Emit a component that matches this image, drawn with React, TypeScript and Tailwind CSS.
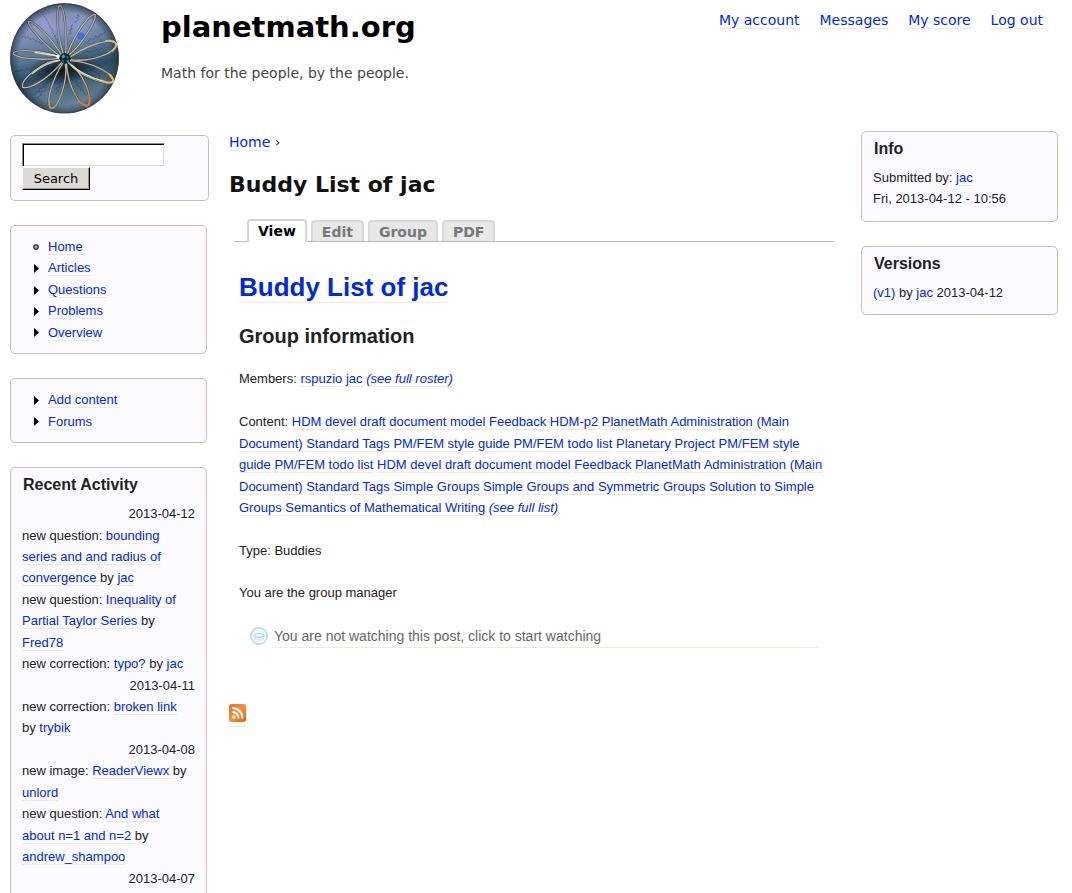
import type { ReactNode } from "react";

function A({ children, className = "" }: { children: ReactNode; className?: string }) {
  return (
    <a href="#" className={`border-b border-[#f0ead8] text-[#0029de] ${className}`}>
      {children}
    </a>
  );
}

const petals = [
  "M192 168 C166 92 170 20 180 16 C193 20 201 92 197 165",
  "M202 162 C228 95 268 42 285 43 C292 62 240 138 208 164",
  "M212 170 C255 140 326 112 348 130 C354 156 275 188 212 179",
  "M210 182 C268 184 346 220 339 245 C322 256 240 232 205 187",
  "M204 187 C250 215 282 298 263 318 C236 320 204 255 199 190",
  "M196 190 C204 240 176 324 153 326 C134 308 160 230 190 188",
  "M184 180 C130 180 58 240 68 262 C98 270 162 218 187 185",
  "M178 169 C92 145 44 150 39 160 C46 174 112 182 178 175",
  "M184 164 C150 108 100 62 85 64 C84 84 146 144 180 168",
];

const scribbles = [
  "M126 40 q5 3 5 9 q7 3 7 9 q7 5 6 12 q7 5 7 13 q8 6 8 15 q7 8 7 16 q6 8 8 20",
  "M66 112 l8-5 l3 8 l9-5 l5 8 l8-3 l6 8 l9 0 l7 7 l10-1 l8 8 l12 4 l10 9",
  "M233 42 l4 8 l-8 3 l6 6 l-10 7 l5 5 M219 74 l-9 6 l8 7 l-11 4 l7 7 l-10 6",
  "M316 96 l-8 8 l-7-2 l-6 9 l-9-2 l-6 10 l-10-3 l-6 10 l-10 0",
  "M306 143 l-9 10 l-4-7 l-9 9 l-6-5 l-9 7 l-8-4 l-10 5",
  "M44 216 l9-5 l3 5 l10-7 l7 4 l9-8 l9 5 l11-9 l10 4 l12-10 l12 2",
  "M103 285 l8-11 l6 4 l2-14 l9 1 l3-13 l10-2 l3-12 M112 294 l10-8 l1-11 l11-2 l3-14",
  "M166 282 l9-8 l-6-9 l12-5 l-4-11 l9-6 M186 242 l3-12",
  "M227 242 l7 8 l-2 8 l11 3 l-1 10 l10 2 l1 11",
  "M250 196 l9 8 l8-3 l4 10 l10-1 l6 10 l9 0 l3 12 M263 221 l10 6 l8-1 l8 9",
];

function Logo() {
  return (
    <svg viewBox="30 9 327 333" className="h-[111px] w-[109px]" role="img" aria-label="Home">
      <defs>
        <linearGradient id="sky" x1="0.3" y1="0" x2="0.55" y2="1">
          <stop offset="0" stopColor="#7d88a8" />
          <stop offset="0.25" stopColor="#8290b8" />
          <stop offset="0.46" stopColor="#54768f" />
          <stop offset="0.64" stopColor="#2b4c64" />
          <stop offset="1" stopColor="#7593a8" />
        </linearGradient>
        <radialGradient id="rim">
          <stop offset="0.84" stopColor="#10202c" stopOpacity="0" />
          <stop offset="0.96" stopColor="#1d3038" stopOpacity="0.5" />
          <stop offset="1" stopColor="#26363b" stopOpacity="0.9" />
        </radialGradient>
        <radialGradient id="shade">
          <stop offset="0" stopColor="#03101c" stopOpacity="0.9" />
          <stop offset="1" stopColor="#03101c" stopOpacity="0" />
        </radialGradient>
        <radialGradient id="lilac">
          <stop offset="0" stopColor="#a3a5df" stopOpacity="0.75" />
          <stop offset="1" stopColor="#8e9bd0" stopOpacity="0" />
        </radialGradient>
        <radialGradient id="spark">
          <stop offset="0" stopColor="#5a8cff" />
          <stop offset="0.45" stopColor="#2858f0" stopOpacity="0.85" />
          <stop offset="1" stopColor="#2858f0" stopOpacity="0" />
        </radialGradient>
        <linearGradient id="wire" gradientUnits="userSpaceOnUse" x1="100" y1="20" x2="300" y2="320">
          <stop offset="0" stopColor="#8b8c8a" />
          <stop offset="0.4" stopColor="#bdb9aa" />
          <stop offset="0.7" stopColor="#cdb78c" />
          <stop offset="1" stopColor="#b97a50" />
        </linearGradient>
      </defs>
      <ellipse cx="193.500" cy="175" rx="163" ry="165" fill="url(#sky)" />
      <ellipse cx="140" cy="75" rx="80" ry="55" fill="url(#lilac)" />
      <ellipse cx="240" cy="90" rx="70" ry="65" fill="url(#lilac)" opacity="0.6" />
      <ellipse cx="140" cy="280" rx="70" ry="45" fill="url(#lilac)" opacity="0.4" />
      <ellipse cx="175" cy="212" rx="90" ry="44" fill="url(#shade)" />
      <ellipse cx="225" cy="200" rx="75" ry="42" fill="url(#shade)" opacity="0.5" />
      <ellipse cx="193.500" cy="175" rx="163" ry="165" fill="url(#rim)" />
      <g fill="none" stroke="#14222f" strokeWidth="3" opacity="0.4">
        {scribbles.map((d) => (
          <path key={d} d={d} strokeDasharray="8 3" />
        ))}
      </g>
      <g fill="none" strokeLinejoin="round">
        {petals.map((d) => (
          <path key={d} d={d} stroke="#1b2224" strokeWidth="7" opacity="0.6" />
        ))}
        {petals.map((d) => (
          <path key={d} d={d} stroke="url(#wire)" strokeWidth="4" />
        ))}
      </g>
      <g fill="none" strokeLinecap="round">
        <path d="M318 123 Q341 120 348 131 Q350 142 336 153" stroke="#d8b57a" strokeWidth="6" />
        <path d="M329 224 Q343 239 338 246 Q325 251 303 242" stroke="#e8b765" strokeWidth="7" />
        <path d="M268 292 Q271 313 262 318 Q248 316 236 303" stroke="#c9794e" strokeWidth="7" />
        <path d="M168 316 Q158 326 152 325 Q146 317 147 302" stroke="#b89160" strokeWidth="6" />
        <path d="M215 196 Q245 224 303 242" stroke="#f2e4bd" strokeWidth="4" />
        <path d="M105 157 L172 168" stroke="#ece5c7" strokeWidth="4" />
        <path d="M98 220 Q140 186 180 181" stroke="#d8ceb2" strokeWidth="4" />
      </g>
      <circle cx="195" cy="175" r="16" fill="#10262f" />
      <path d="M184 168 l8-5 l4 8 l-8 5z M198 182 l10-2 l-4 9z" fill="#2fa3b5" />
      <path d="M199 166 l8 5 l-6 6z M185 180 l8 0 l-3 8z" fill="#3864ad" />
      <path d="M170 164 l9 2 l-2 9 l-8-2z" fill="#f4f0e2" />
      <circle cx="242" cy="108" r="14" fill="url(#spark)" />
    </svg>
  );
}

function Box({ title, children, className = "" }: { title?: string; children: ReactNode; className?: string }) {
  return (
    <section
      className={`rounded-[5px] border border-[#cbbdb0] bg-[#fafaff] px-[11px] font-['Liberation_Sans',Arial,sans-serif] text-[13px] leading-[1.65] ${className}`}
    >
      {title && <h2 className="mb-2 px-px pt-[7px] text-base leading-5 font-bold">{title}</h2>}
      {children}
    </section>
  );
}

function Menu({ items }: { items: string[] }) {
  return (
    <ul className="pl-[10px]">
      {items.map((item) => (
        <li key={item} className="flex items-center gap-2">
          <svg viewBox="0 0 8 10" className="h-[10px] w-2" aria-hidden="true">
            {item === "Home" ? (
              <circle cx="4" cy="5" r="2.200" fill="#aaa" stroke="#333" strokeWidth="1.300" />
            ) : (
              <path d="M2 1 L7 5.500 L2 10 Z" fill="#000" />
            )}
          </svg>
          <span>
            <A>{item}</A>
          </span>
        </li>
      ))}
    </ul>
  );
}

type Entry = { kind: string; title: string; by: string };
const activity: { date: string; entries: Entry[] }[] = [
  {
    date: "2013-04-12",
    entries: [
      { kind: "question", title: "bounding series and and radius of convergence ", by: "jac" },
      { kind: "question", title: "Inequality of Partial Taylor Series ", by: "Fred78" },
      { kind: "correction", title: "typo? ", by: "jac" },
    ],
  },
  { date: "2013-04-11", entries: [{ kind: "correction", title: "broken link ", by: "trybik" }] },
  {
    date: "2013-04-08",
    entries: [
      { kind: "image", title: "ReaderViewx ", by: "unlord" },
      { kind: "question", title: "And what about n=1 and n=2 ", by: "andrew_shampoo" },
    ],
  },
  { date: "2013-04-07", entries: [] },
];

const content = [
  "HDM devel draft document model",
  "Feedback",
  "HDM-p2",
  "PlanetMath Administration (Main Document)",
  "Standard Tags",
  "PM/FEM style guide",
  "PM/FEM todo list",
  "Planetary Project",
  "PM/FEM style guide",
  "PM/FEM todo list",
  "HDM devel draft document model",
  "Feedback",
  "PlanetMath Administration (Main Document)",
  "Standard Tags",
  "Simple Groups",
  "Simple Groups and Symmetric Groups",
  "Solution to Simple Groups",
  "Semantics of Mathematical Writing",
];

function Tabs() {
  return (
    <nav className="mx-[5px] mt-5 flex h-[23px] items-end gap-1 border-b border-[#bbb] pl-[13px] text-sm leading-[21px] font-bold">
      <a
        href="#"
        aria-current="page"
        className="-mb-px h-[23px] rounded-t-[4px] border-x-2 border-t-2 border-[#d4d4d4] bg-white px-[9px] text-black"
      >
        View
      </a>
      {["Edit", "Group", "PDF"].map((t) => (
        <a
          key={t}
          href="#"
          className="h-[21px] rounded-t-[4px] border-x-2 border-t-2 border-[#d9d9d9] bg-[#e8e8e8] px-[9px] leading-5 text-[#777]"
        >
          {t}
        </a>
      ))}
    </nav>
  );
}

export default function App() {
  return (
    <div className="bg-white font-['DejaVu_Sans',Verdana,sans-serif] text-sm text-[#222]">
      <header className="flex h-[131px] items-start pt-[3px] pr-[29px] pl-[10px]">
        <a href="#">
          <Logo />
        </a>
        <div className="ml-[42px] flex-1">
          <h1 className="pt-[5px] text-[29px] leading-[38px] font-bold text-black">planetmath.org</h1>
          <p className="mt-[17px] leading-5 text-[#444]">Math for the people, by the people.</p>
        </div>
        <nav className="flex gap-5 pt-[7px] leading-5">
          {["My account", "Messages", "My score", "Log out"].map((l) => (
            <span key={l}>
              <A>{l}</A>
            </span>
          ))}
        </nav>
      </header>

      <div className="flex items-start pr-[14px] pl-[10px]">
        <aside className="flex w-[197px] shrink-0 flex-col gap-6 pt-1">
          <Box className="-mr-[2px] h-[66px] pt-[7px]">
            <form onSubmit={(e) => e.preventDefault()}>
              <input
                type="text"
                aria-label="Search"
                className="block h-6 w-[143px] border border-t-[#8d8a83] border-r-white border-b-white border-l-[#8d8a83] bg-white px-1 shadow-[inset_1px_1px_0_#000,inset_-1px_-1px_0_#dcdad5]"
              />
              <button
                type="submit"
                className="block h-[23px] w-[68px] border border-t-white border-r-black border-b-black border-l-white bg-[#dcdad5] font-['DejaVu_Sans',Verdana,sans-serif] leading-5 text-black shadow-[inset_-1px_-1px_0_#9b9892]"
              >
                Search
              </button>
            </form>
          </Box>
          <Box className="pt-[10px] pb-[10px]">
            <Menu items={["Home", "Articles", "Questions", "Problems", "Overview"]} />
          </Box>
          <Box className="pt-[10px] pb-[10px]">
            <Menu items={["Add content", "Forums"]} />
          </Box>
          <Box title="Recent Activity" className="pb-3">
            {activity.map((day) => (
              <div key={day.date}>
                <p className="text-right">{day.date}</p>
                {day.entries.map((e) => (
                  <p key={e.title} className="pr-[3px]">
                    new {e.kind}: <A>{e.title}</A>by <A>{e.by}</A>
                  </p>
                ))}
              </div>
            ))}
          </Box>
        </aside>

        <main className="mr-[22px] ml-[22px] min-w-0 flex-1">
          <p className="pt-px leading-5">
            <A>Home</A> ›
          </p>
          <h1 className="mt-[19px] text-[22px] leading-7 font-bold text-[#111]">Buddy List of jac</h1>
          <Tabs />
          <article className="px-[10px] font-['Liberation_Sans',Arial,sans-serif] text-[13px] leading-[1.65]">
            <h2 className="mt-[27px] text-[26px] leading-9 font-bold">
              <A>Buddy List of jac</A>
            </h2>
            <h3 className="mt-[17px] text-xl leading-7 font-bold">Group information</h3>
            <p className="mt-[18px]">
              Members: <A>rspuzio</A> <A>jac</A>{" "}
              <em>
                <A>(see full roster)</A>
              </em>
            </p>
            <p className="mt-[22px]">
              Content:{" "}
              {content.map((c, i) => (
                <span key={i}>
                  <A>{c}</A>{" "}
                </span>
              ))}
              <em>
                <A>(see full list)</A>
              </em>
            </p>
            <p className="mt-[21px]">Type: Buddies</p>
            <p className="mt-[21px]">You are the group manager</p>
            <div className="mt-[21px] mr-[6px] ml-[11px] flex items-center gap-[6px]">
              <svg viewBox="0 0 18 18" className="h-[18px] w-[18px]" aria-hidden="true">
                <circle cx="9" cy="9" r="8.200" fill="#f4f5f8" stroke="#b4dbf5" strokeWidth="1.600" />
                <path d="M4 10.500 Q9 15 14 10.500" fill="none" stroke="#e6e7ea" strokeWidth="2" />
                <path d="M3.500 8.500 Q9 4 14.500 8.500 Q9 12.500 3.500 8.500 Z" fill="#e6f1f7" stroke="#afd3e8" strokeWidth="1" />
              </svg>
              <a href="#" className="mr-[5px] flex-1 border-b border-[#f0ead8] text-sm leading-[22px] text-[#666]">
                You are not watching this post, click to start watching
              </a>
            </div>
          </article>
          <a href="#" aria-label="RSS feed" className="mt-14 inline-block border-b border-[#f0ead8] pb-1">
            <svg viewBox="0 0 17 18" className="h-[18px] w-[17px]" aria-hidden="true">
              <defs>
                <linearGradient id="rss" x1="0" y1="0" x2="1" y2="1">
                  <stop offset="0" stopColor="#e0702b" />
                  <stop offset="0.5" stopColor="#f4943c" />
                  <stop offset="1" stopColor="#d95f21" />
                </linearGradient>
              </defs>
              <rect width="17" height="18" rx="2.500" fill="url(#rss)" />
              <circle cx="4.800" cy="13" r="1.700" fill="#fff" />
              <path d="M3.300 8 Q9.200 8.300 9.500 14.500 M3.300 4 Q13 4.500 13.500 14.500" fill="none" stroke="#fff" strokeWidth="1.900" />
            </svg>
          </a>
        </main>

        <aside className="flex w-[197px] shrink-0 flex-col gap-6">
          <Box title="Info" className="pb-[11px]">
            <p>
              Submitted by: <A>jac</A>
            </p>
            <p>Fri, 2013-04-12 - 10:56</p>
          </Box>
          <Box title="Versions" className="pb-[11px]">
            <p>
              <A>(v1)</A> by <A>jac</A> 2013-04-12
            </p>
          </Box>
        </aside>
      </div>
    </div>
  );
}
